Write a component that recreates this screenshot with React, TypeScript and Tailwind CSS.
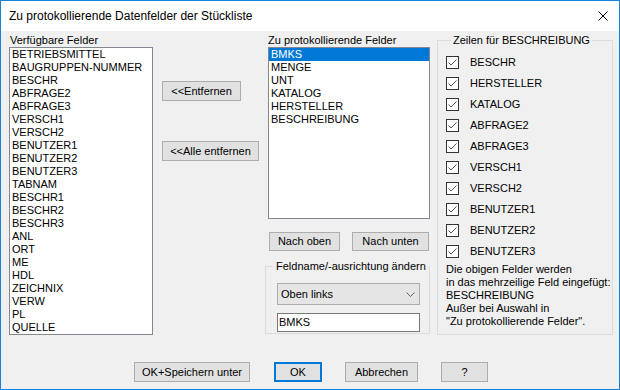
import React from 'react';

const available = [
  'BETRIEBSMITTEL',
  'BAUGRUPPEN-NUMMER',
  'BESCHR',
  'ABFRAGE2',
  'ABFRAGE3',
  'VERSCH1',
  'VERSCH2',
  'BENUTZER1',
  'BENUTZER2',
  'BENUTZER3',
  'TABNAM',
  'BESCHR1',
  'BESCHR2',
  'BESCHR3',
  'ANL',
  'ORT',
  'ME',
  'HDL',
  'ZEICHNIX',
  'VERW',
  'PL',
  'QUELLE',
];

const logged = ['BMKS', 'MENGE', 'UNT', 'KATALOG', 'HERSTELLER', 'BESCHREIBUNG'];

const lines = [
  'BESCHR',
  'HERSTELLER',
  'KATALOG',
  'ABFRAGE2',
  'ABFRAGE3',
  'VERSCH1',
  'VERSCH2',
  'BENUTZER1',
  'BENUTZER2',
  'BENUTZER3',
];

const Btn: React.FC<{ className?: string; children: React.ReactNode }> = ({ className = '', children }) => (
  <button
    className={`flex items-center justify-center bg-[#e1e1e1] border border-[#adadad] leading-[13px] ${className}`}
  >
    {children}
  </button>
);

const CheckBox: React.FC = () => (
  <svg width="13" height="13" viewBox="0 0 13 13" className="shrink-0">
    <rect x="0.5" y="0.5" width="12" height="12" fill="#ffffff" stroke="#333333" />
    <path d="M2.5 6.5 L5 9 L10.5 3.5" fill="none" stroke="#555555" strokeWidth="1" />
  </svg>
);

const App: React.FC = () => {
  return (
    <div className="w-[620px] h-[390px] border border-[#1883d7] bg-[#f0f0f0] flex flex-col font-['Liberation_Sans',Arial,sans-serif] text-[11px] leading-[13px] text-black">
      {/* Title bar */}
      <div className="h-[30px] bg-white flex items-center justify-between pl-[8px] pr-[11px]">
        <span className="text-[12px]">Zu protokollierende Datenfelder der Stückliste</span>
        <svg width="10" height="10" viewBox="0 0 10 10">
          <path d="M0.5 0.5 L9.5 9.5 M9.5 0.5 L0.5 9.5" stroke="#000000" strokeWidth="1" />
        </svg>
      </div>

      <div className="flex-1 flex flex-col">
        <div className="flex pl-[8px] pt-[3px]">
          {/* Available fields */}
          <div className="w-[144px] flex flex-col">
            <div className="h-[13px] pl-[1px]">Verfügbare Felder</div>
            <div className="h-[288px] bg-white border border-[#828790] pl-[2px]">
              {available.map((f) => (
                <div key={f} className="h-[13px]">
                  {f}
                </div>
              ))}
            </div>
          </div>

          {/* Remove buttons */}
          <div className="ml-[9px] w-[97px] flex flex-col items-start pt-[47px]">
            <Btn className="w-[79px] h-[20px]">&lt;&lt;Entfernen</Btn>
            <Btn className="w-[97px] h-[20px] mt-[40px]">&lt;&lt;Alle entfernen</Btn>
          </div>

          {/* Logged fields */}
          <div className="ml-[9px] w-[162px] flex flex-col">
            <div className="h-[13px]">Zu protokollierende Felder</div>
            <div className="h-[172px] bg-white border border-[#828790]">
              {logged.map((f, i) => (
                <div
                  key={f}
                  className={`h-[13px] pl-[2px] ${i === 0 ? 'bg-[#0078d7] text-white' : ''}`}
                >
                  {f}
                </div>
              ))}
            </div>
            <div className="flex mt-[13px] ml-[1px] gap-[12px]">
              <Btn className="w-[71px] h-[19px]">Nach oben</Btn>
              <Btn className="w-[77px] h-[19px]">Nach unten</Btn>
            </div>
            <fieldset className="-ml-[3px] w-[165px] mt-[9px] border border-[#dcdcdc] pl-[11px] pb-[1px]">
              <legend className="ml-[-4px] px-[3px] leading-[13px]">Feldname/-ausrichtung ändern</legend>
              <div className="mt-[10px] w-[143px] h-[22px] bg-[#e5e5e5] border border-[#acacac] flex items-center justify-between pl-[3px] pr-[4px]">
                <span>Oben links</span>
                <svg width="9" height="5" viewBox="0 0 9 5">
                  <path d="M0.5 0.5 L4.5 4.5 L8.5 0.5" fill="none" stroke="#606060" strokeWidth="1" />
                </svg>
              </div>
              <div className="mt-[8px] w-[143px] h-[19px] bg-white border border-[#7a7a7a] flex items-center pl-[1px]">
                BMKS
              </div>
            </fieldset>
          </div>

          {/* Lines for BESCHREIBUNG */}
          <fieldset className="ml-[7px] w-[176px] h-[301px] border border-[#dcdcdc] pl-[8px] pt-[5px]">
            <legend className="ml-[5px] px-[2px] leading-[13px]">Zeilen für BESCHREIBUNG</legend>
            {lines.map((l) => (
              <div key={l} className="h-[21px] flex items-center">
                <CheckBox />
                <span className="ml-[11px]">{l}</span>
              </div>
            ))}
            <div className="mt-[1px]">
              <div>Die obigen Felder werden</div>
              <div>in das mehrzeilige Feld eingefügt:</div>
              <div>BESCHREIBUNG</div>
              <div>Außer bei Auswahl in</div>
              <div>"Zu protokollierende Felder".</div>
            </div>
          </fieldset>
        </div>

        {/* Bottom buttons */}
        <div className="flex pl-[133px] mt-[27px]">
          <Btn className="w-[116px] h-[20px]">OK+Speichern unter</Btn>
          <button className="ml-[24px] w-[48px] h-[20px] flex items-center justify-center bg-[#e1e1e1] border-2 border-[#0078d7] leading-[13px]">
            OK
          </button>
          <Btn className="ml-[23px] w-[73px] h-[20px]">Abbrechen</Btn>
          <Btn className="ml-[23px] w-[47px] h-[20px]">?</Btn>
        </div>
      </div>
    </div>
  );
};

export default App;
